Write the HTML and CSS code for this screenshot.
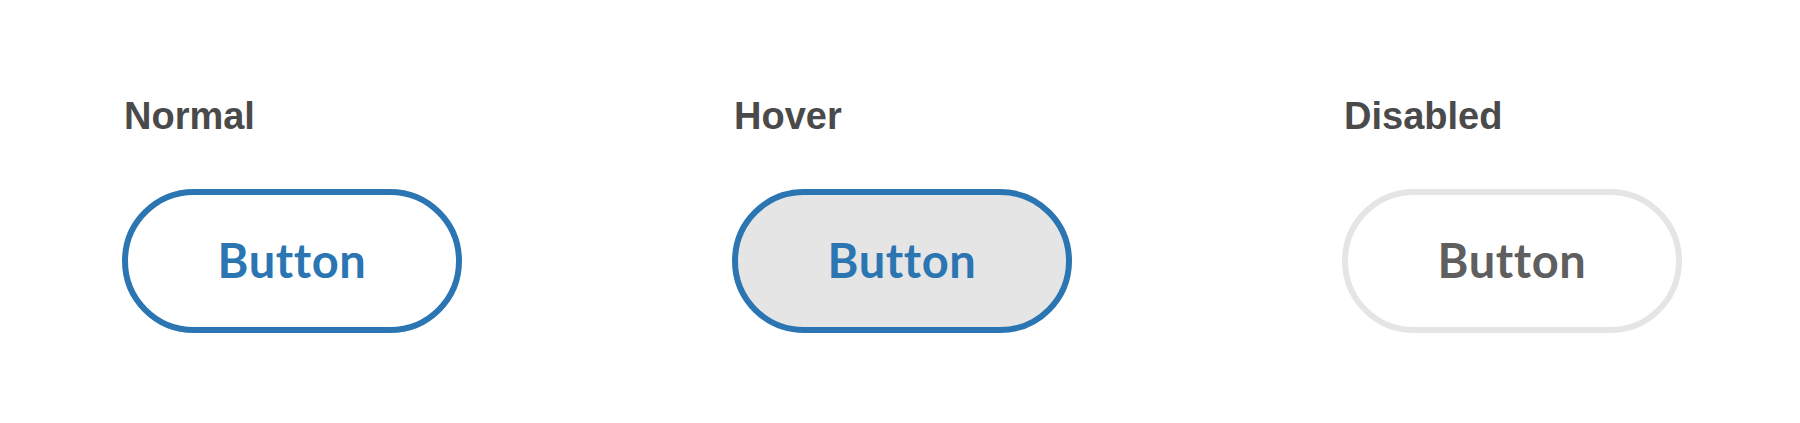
FILE: index.html
```html
<!DOCTYPE html>
<html lang="en">
<head>
<meta charset="utf-8">
<title>Button states</title>
<link rel="stylesheet" href="styles.css">
</head>
<body>
<main class="states">
  <section class="state">
    <h2 class="state-label">Normal</h2>
    <button class="btn" type="button">Button</button>
  </section>
  <section class="state">
    <h2 class="state-label">Hover</h2>
    <button class="btn btn-hover" type="button">Button</button>
  </section>
  <section class="state">
    <h2 class="state-label">Disabled</h2>
    <button class="btn" type="button" disabled>Button</button>
  </section>
</main>
</body>
</html>
```
FILE: styles.css
```css
html, body {
  margin: 0;
  padding: 0;
  background: #ffffff;
}

.states {
  display: flex;
  gap: 270px;
  padding: 97px 0 0 122px;
}

.state {
  display: flex;
  flex-direction: column;
  align-items: flex-start;
}

.state-label {
  margin: 0 0 54px 2px;
  font-family: "Liberation Sans", Arial, sans-serif;
  font-weight: 700;
  font-size: 38px;
  line-height: 38px;
  color: #4a4a4a;
}

.btn {
  box-sizing: border-box;
  width: 340px;
  height: 144px;
  border: 6px solid #2a75b2;
  border-radius: 72px;
  background: #ffffff;
  color: #2a75b2;
  font-family: Lato, "Open Sans", sans-serif;
  font-weight: 700;
  font-size: 47px;
  letter-spacing: 0.6px;
  line-height: 1;
  padding: 0 0 2px;
  display: flex;
  align-items: center;
  justify-content: center;
  cursor: pointer;
}

.btn-hover {
  background: #e5e5e5;
}

.btn:disabled {
  border-color: #e5e5e5;
  background: #ffffff;
  color: #5f5f5f;
  cursor: default;
}
```
